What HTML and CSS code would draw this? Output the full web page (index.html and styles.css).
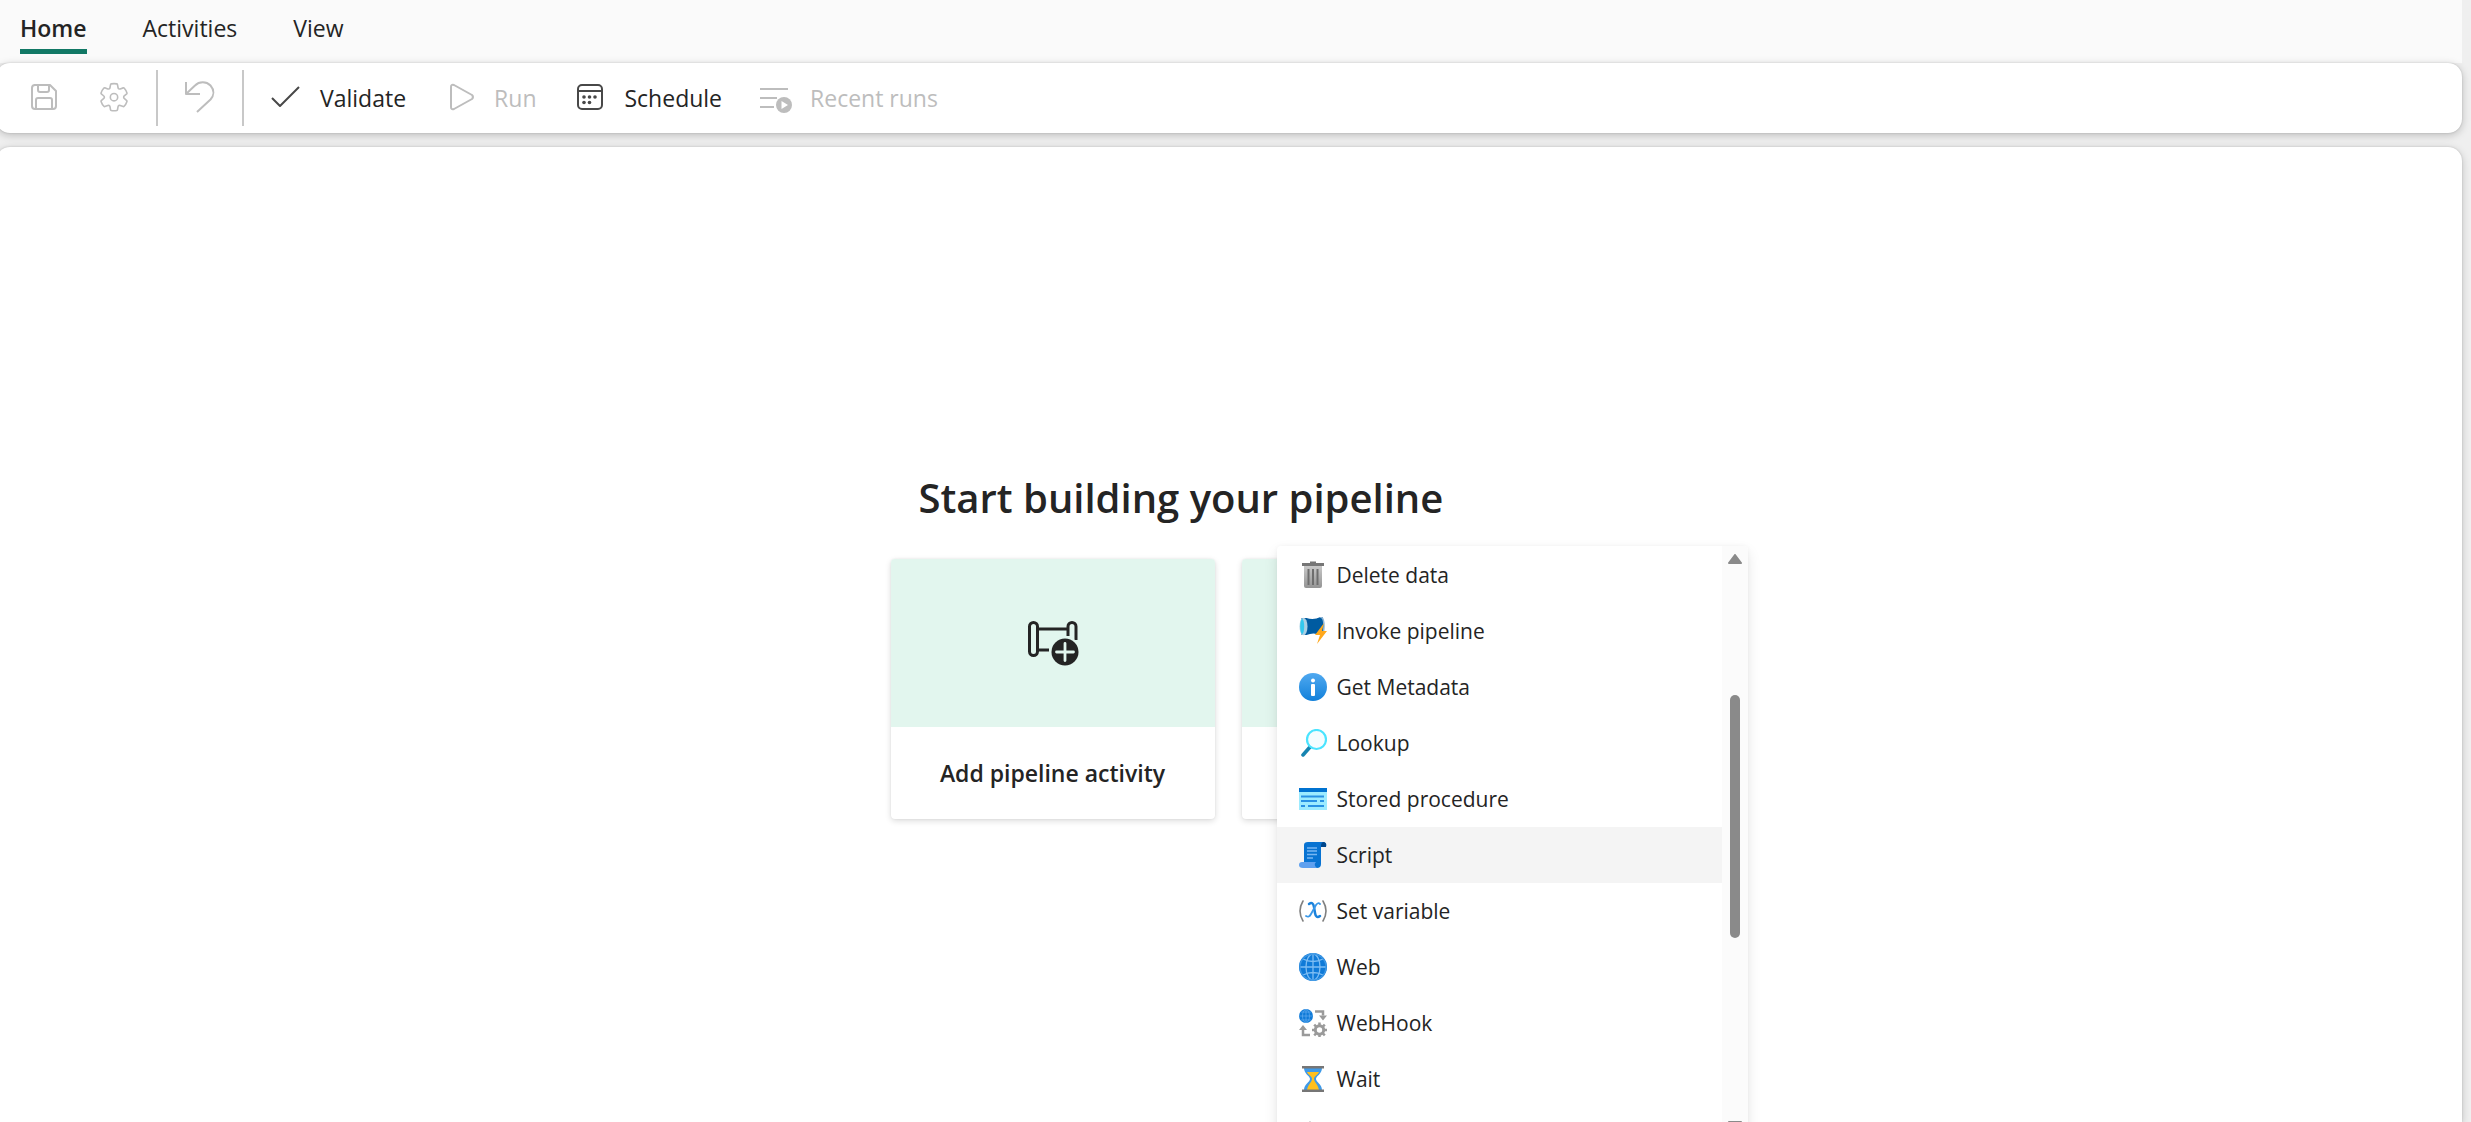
FILE: index.html
```html
<!DOCTYPE html>
<html lang="en">
<head>
<meta charset="utf-8">
<title>Pipeline editor</title>
<link rel="stylesheet" href="styles.css">
</head>
<body>
<div class="app">
  <nav class="tabs">
    <a class="tab tab-active" href="#home">Home</a>
    <a class="tab" href="#activities">Activities</a>
    <a class="tab" href="#view">View</a>
  </nav>

  <div class="toolbar">
    <button class="tool" disabled aria-label="Save">
      <svg class="tool-icon" viewBox="0 0 32 32"><path d="M6 3h16l6 6v15a3 3 0 0 1-3 3H7a3 3 0 0 1-3-3V6a3 3 0 0 1 3-3M10 3v5a2 2 0 0 0 2 2h7a2 2 0 0 0 2-2V3M8 27V18a2 2 0 0 1 2-2h12a2 2 0 0 1 2 2v9"/></svg>
    </button>
    <button class="tool" disabled aria-label="Settings">
      <svg class="tool-icon thin" viewBox="0 0 20 20"><path d="M1.91 6.88A8.5 8.5 0 0 1 3.7 3.8a.5.5 0 0 1 .54-.13l1.92.68a1 1 0 0 0 1.32-.76l.36-2a.5.5 0 0 1 .4-.4 8.53 8.53 0 0 1 3.55 0c.2.04.35.2.38.4l.37 2a1 1 0 0 0 1.32.76l1.92-.68a.5.5 0 0 1 .54.13 8.5 8.5 0 0 1 1.78 3.08c.06.2 0 .4-.15.54l-1.56 1.32a1 1 0 0 0 0 1.52l1.56 1.32a.5.5 0 0 1 .15.54 8.5 8.5 0 0 1-1.78 3.08.5.5 0 0 1-.54.13l-1.92-.68a1 1 0 0 0-1.32.76l-.37 2a.5.5 0 0 1-.38.4 8.53 8.53 0 0 1-3.56 0 .5.5 0 0 1-.39-.4l-.36-2a1 1 0 0 0-1.32-.76l-1.92.68a.5.5 0 0 1-.54-.13 8.5 8.5 0 0 1-1.78-3.08.5.5 0 0 1 .15-.54l1.56-1.32a1 1 0 0 0 0-1.52L2.06 7.42a.5.5 0 0 1-.15-.54Z"/><circle cx="10" cy="9.5" r="2.3"/></svg>
    </button>
    <span class="divider"></span>
    <button class="tool" disabled aria-label="Undo">
      <svg class="tool-icon" viewBox="0 0 32 32"><path d="M2 0v12h14M2 12l9-8.500a11 11 0 0 1 15.500 0c4 4.500 3.500 10 0 14L13 30"/></svg>
    </button>
    <span class="divider"></span>
    <button class="tool">
      <svg class="tool-icon dark" viewBox="0 0 32 32"><path d="M2 16l8 8L29 5"/></svg>
      Validate
    </button>
    <button class="tool" disabled>
      <svg class="tool-icon" viewBox="0 0 32 32"><path d="M7 5v20q0 3 3 2l18-10q2-2 0-4L10 3q-3-1-3 2Z"/></svg>
      Run
    </button>
    <button class="tool">
      <svg class="tool-icon dark" viewBox="0 0 32 32"><rect x="4" y="3" width="24" height="24" rx="4"/><path d="M4 9h24"/><g class="solid"><circle cx="10" cy="15" r="1.8"/><circle cx="15.500" cy="15" r="1.8"/><circle cx="21" cy="15" r="1.8"/><circle cx="10" cy="20.500" r="1.8"/><circle cx="15.500" cy="20.500" r="1.8"/></g></svg>
      Schedule
    </button>
    <button class="tool" disabled>
      <svg class="tool-icon" viewBox="0 0 32 32"><path d="M0 7h28M0 16h17M0 25h14"/><circle class="solid" cx="24" cy="23" r="8"/><path class="hole" d="M21.500 19v8l6.500-4Z"/></svg>
      Recent runs
    </button>
  </div>

  <main class="canvas">
    <section class="start">
      <h1 class="start-title">Start building your pipeline</h1>
      <div class="cards">
        <button class="card">
          <span class="card-art">
            <svg class="card-icon" viewBox="0 0 52 48"><g fill="none" stroke="#242424" stroke-width="3"><rect x="2.500" y="3.500" width="8" height="33" rx="4"/><path d="M10.500 10H41M10.500 31H22"/><path d="M41 17V7.500a4 4 0 0 1 8 0V21"/></g><circle cx="38" cy="33" r="15.500" fill="#e2f6ee"/><circle cx="38" cy="33" r="13.500" fill="#242424"/><path d="M38 24.500v17M29.500 33h17" stroke="#e2f6ee" stroke-width="2.800" stroke-linecap="round"/></svg>
          </span>
          <span class="card-label">Add pipeline activity</span>
        </button>
        <div class="card"><span class="card-art"></span></div>

        <div class="menu">
          <ul class="menu-list">
            <li><button class="item">
              <svg class="item-icon" viewBox="0 0 28 28"><defs><linearGradient id="gBin" x2="0" y2="1"><stop stop-color="#c8c8c8"/><stop offset="1" stop-color="#949494"/></linearGradient></defs><path d="M5 5h18v20a2 2 0 0 1-2 2H7a2 2 0 0 1-2-2Z" fill="url(#gBin)"/><path d="M3 2h8V.5h6V2h8v3H3Z" fill="#767676"/><path d="M9.500 8v16M14 8v16M18.500 8v16" stroke="#6e6e6e" stroke-width="2"/></svg>
              Delete data</button></li>
            <li><button class="item">
              <svg class="item-icon" viewBox="0 0 28 28"><path d="M2.500 1h5q7 2.500 14-1h2q3 9 0 18h-2q-7-3-14 0h-5Z" fill="#005ba1"/><path d="M21 0q4 0 4 9 0 6-2 9" fill="none" stroke="#8fb6d6" stroke-width="1.500"/><ellipse cx="4.500" cy="9.500" rx="4" ry="8.800" fill="#a9cfe3"/><ellipse cx="3.200" cy="9.500" rx="2" ry="7.500" fill="#32c8ee"/><path d="M25 6l-9 12h5l-3 9 10-13h-5Z" fill="#ffa81c"/></svg>
              Invoke pipeline</button></li>
            <li><button class="item">
              <svg class="item-icon" viewBox="0 0 28 28"><defs><linearGradient id="gInfo" x2="0" y2="1"><stop stop-color="#50a9f0"/><stop offset="1" stop-color="#1180da"/></linearGradient></defs><circle cx="14" cy="14" r="14" fill="url(#gInfo)"/><circle cx="14" cy="7.500" r="2" fill="#fff"/><rect x="12" y="11" width="4" height="12" rx="1" fill="#fff"/></svg>
              Get Metadata</button></li>
            <li><button class="item">
              <svg class="item-icon" viewBox="0 0 28 28"><path d="M11 18l-7 8" stroke="#1784b0" stroke-width="3.500" stroke-linecap="round"/><circle cx="17.500" cy="10.500" r="9.500" fill="#f4fdff" stroke="#4be4ff" stroke-width="2.200"/></svg>
              Lookup</button></li>
            <li><button class="item">
              <svg class="item-icon" viewBox="0 0 28 28"><path d="M0 3h28v22H0Z" fill="#9cebff"/><path d="M0 3h28v4H0Z" fill="#0072d0"/><path d="M2 11.500h23M2 16h16M21 16h4M2 21h4M9 21h16" stroke="#2892e4" stroke-width="2"/></svg>
              Stored procedure</button></li>
            <li><button class="item item-hover">
              <svg class="item-icon" viewBox="0 0 28 28"><path d="M5 4q0-3 4-3h16q3 1 2 4h-5v18q0 4-4 4H5Z" fill="#0873d2"/><path d="M22 5q0-4 3-4 3 1 2 5h-5Z" fill="#00468b"/><path d="M3 21h14q-3 3 1 6H4q-4 0-4-3t3-3Z" fill="#5ea0ef"/><path d="M8 7h10M8 10h10M8 13.500h10M8 17h6" stroke="#78b6f2" stroke-width="1.500"/></svg>
              Script</button></li>
            <li><button class="item">
              <svg class="item-icon" viewBox="0 0 28 28"><g fill="none" stroke-linecap="round"><path d="M4 4Q-2 14 4 24M24 4Q30 14 24 24" stroke="#808080" stroke-width="1.600"/><path d="M10 7q4-3 5 3l1 6q1 6 5 3" stroke="#1a82dc" stroke-width="2.500"/><path d="M21 7q-2-2-4 1l-5 9q-2 4-5 2" stroke="#3a98e8" stroke-width="1.800"/></g></svg>
              Set variable</button></li>
            <li><button class="item">
              <svg class="item-icon" viewBox="0 0 28 28"><circle cx="14" cy="14" r="14" fill="#0f7ad8"/><g fill="none" stroke="#7dbdf3" stroke-width="1.300"><ellipse cx="14" cy="14" rx="7" ry="13"/><path d="M14 1v26M1 14h26M4 6q10 5 20 0M4 22q10-5 20 0"/><circle cx="14" cy="14" r="13" stroke="#3d97e4"/></g></svg>
              Web</button></li>
            <li><button class="item">
              <svg class="item-icon" viewBox="0 0 28 28"><circle cx="7" cy="7" r="7" fill="#0f7ad8"/><g fill="none" stroke="#62adf0" stroke-width=".7"><ellipse cx="7" cy="7" rx="3.500" ry="6.500"/><path d="M7 0v14M0 7h14M2 3h10M2 11h10"/></g><g fill="none" stroke="#9a9a9a" stroke-width="2.500"><path d="M16 2.500h8v4M11 26H4v-5"/><circle cx="20.500" cy="21" r="4.200" stroke-width="3"/><path d="M20.500 13.500v3M20.500 25.500v3M13 21h3M25 21h3M15.200 15.700l2 2M23.800 24.300l2 2M15.200 26.300l2-2M23.800 17.700l2-2"/></g><path d="M20 6.500h8l-4 5ZM0 21h8l-4-5Z" fill="#9a9a9a"/></svg>
              WebHook</button></li>
            <li><button class="item">
              <svg class="item-icon" viewBox="0 0 28 28"><path d="M5 3h18c0 6-6 8-6 11s6 5 6 11H5c0-6 6-8 6-11S5 9 5 3Z" fill="#3f9ae8"/><path d="M8 7h12c-1 3-5 4-5 7s4 5 5 11H8c1-6 5-8 5-11S9 10 8 7Z" fill="#ffc01e"/><path d="M3 1h22v2.500H3ZM3 24.500h22V27H3Z" fill="#767676"/></svg>
              Wait</button></li>
            <li><button class="item" aria-label="More">
              <svg class="item-icon" viewBox="0 0 28 28"><path d="M11 0l11 14-11 14L0 14Z" fill="#a8a8a8"/></svg></button></li>
          </ul>
          <div class="scrollbar">
            <svg class="arrow" viewBox="0 0 16 10"><path d="M8 1l6 8H2Z"/></svg>
            <span class="thumb"></span>
            <svg class="arrow" viewBox="0 0 16 10"><path d="M8 9L2 1h12Z"/></svg>
          </div>
        </div>
      </div>
    </section>
  </main>
</div>
</body>
</html>
```
FILE: styles.css
```css
* { box-sizing: border-box; }

body {
  margin: 0;
  overflow: hidden;
  background: #efefef;
  color: #242424;
  font-family: "Open Sans", "Noto Sans", sans-serif;
  font-size: 23px;
}

button {
  border: 0;
  padding: 0;
  background: none;
  color: inherit;
  font: inherit;
}

.app {
  display: flex;
  flex-direction: column;
  height: 100vh;
  padding-right: 9px;
}

.tabs {
  display: flex;
  flex: none;
  gap: 56px;
  height: 63px;
  padding-left: 20px;
  background: #fafafa;
}

.tab {
  height: 54px;
  line-height: 56px;
  color: inherit;
  text-decoration: none;
}

.tab-active {
  border-bottom: 5px solid #117865;
  font-weight: 600;
}

.toolbar {
  display: flex;
  flex: none;
  align-items: center;
  gap: 38px;
  height: 70px;
  margin-left: -4px;
  padding-left: 32px;
  border-radius: 14px;
  background: #fff;
  box-shadow: 0 2px 8px rgba(0, 0, 0, .22), 0 0 2px rgba(0, 0, 0, .16);
}

.tool {
  display: flex;
  align-items: center;
  gap: 18px;
}

.tool:disabled { color: #bdbdbd; }

.tool-icon {
  width: 32px;
  height: 32px;
  fill: none;
  stroke: currentColor;
  stroke-width: 2;
  stroke-linejoin: round;
  overflow: visible;
}

.dark { color: #484848; }
.thin { stroke-width: 1; }
.solid { fill: currentColor; stroke: none; }
.hole { fill: #fff; stroke: none; }

.divider {
  width: 2px;
  height: 56px;
  margin: 0 -12px;
  background: #c8c8c8;
}

.canvas {
  display: flex;
  flex: 1;
  align-items: center;
  justify-content: center;
  min-height: 0;
  margin: 14px 0 0 -4px;
  padding: 20px 2px 0 0;
  border-radius: 14px 14px 0 0;
  background: #fff;
  box-shadow: 0 2px 8px rgba(0, 0, 0, .2), 0 0 2px rgba(0, 0, 0, .16);
}

.start-title {
  margin: 0 0 34px;
  padding-left: 28px;
  font-size: 40px;
  font-weight: 600;
  line-height: 54px;
}

.cards {
  display: flex;
  position: relative;
  gap: 27px;
}

.card {
  display: flex;
  flex-direction: column;
  width: 324px;
  height: 260px;
  border-radius: 4px;
  overflow: hidden;
  background: #fff;
  box-shadow: 0 2px 6px rgba(0, 0, 0, .14), 0 0 2px rgba(0, 0, 0, .08);
}

.card-art {
  display: flex;
  align-items: center;
  justify-content: center;
  width: 100%;
  height: 168px;
  background: #e2f6ee;
}

.card-icon {
  width: 52px;
  height: 48px;
}

.card-label {
  width: 100%;
  line-height: 92px;
  font-weight: 600;
  text-align: center;
}

.menu {
  display: flex;
  position: absolute;
  top: -13px;
  left: 386px;
  width: 471px;
  height: 594px;
  border-radius: 4px;
  overflow: hidden;
  background: #fff;
  box-shadow: 0 6px 14px rgba(0, 0, 0, .1), 0 0 4px rgba(0, 0, 0, .04);
}

.menu-list {
  flex: 1;
  margin: 0;
  padding: 1px 0 0;
  list-style: none;
  font-size: 21px;
}

.item {
  display: flex;
  align-items: center;
  gap: 10px;
  width: 100%;
  height: 56px;
  padding-left: 22px;
}

.item-hover { background: #f4f4f4; }

.item-icon {
  width: 28px;
  height: 28px;
}

.scrollbar {
  display: flex;
  flex-direction: column;
  align-items: center;
  justify-content: space-between;
  width: 26px;
  padding: 8px 0 9px;
  background: #fbfbfb;
}

.arrow {
  width: 16px;
  height: 10px;
  fill: #8a8a8a;
  stroke: #8a8a8a;
  stroke-width: 2;
  stroke-linejoin: round;
}

.thumb {
  width: 10px;
  height: 243px;
  margin-bottom: 52px;
  border-radius: 5px;
  background: #8a8a8a;
}
```
